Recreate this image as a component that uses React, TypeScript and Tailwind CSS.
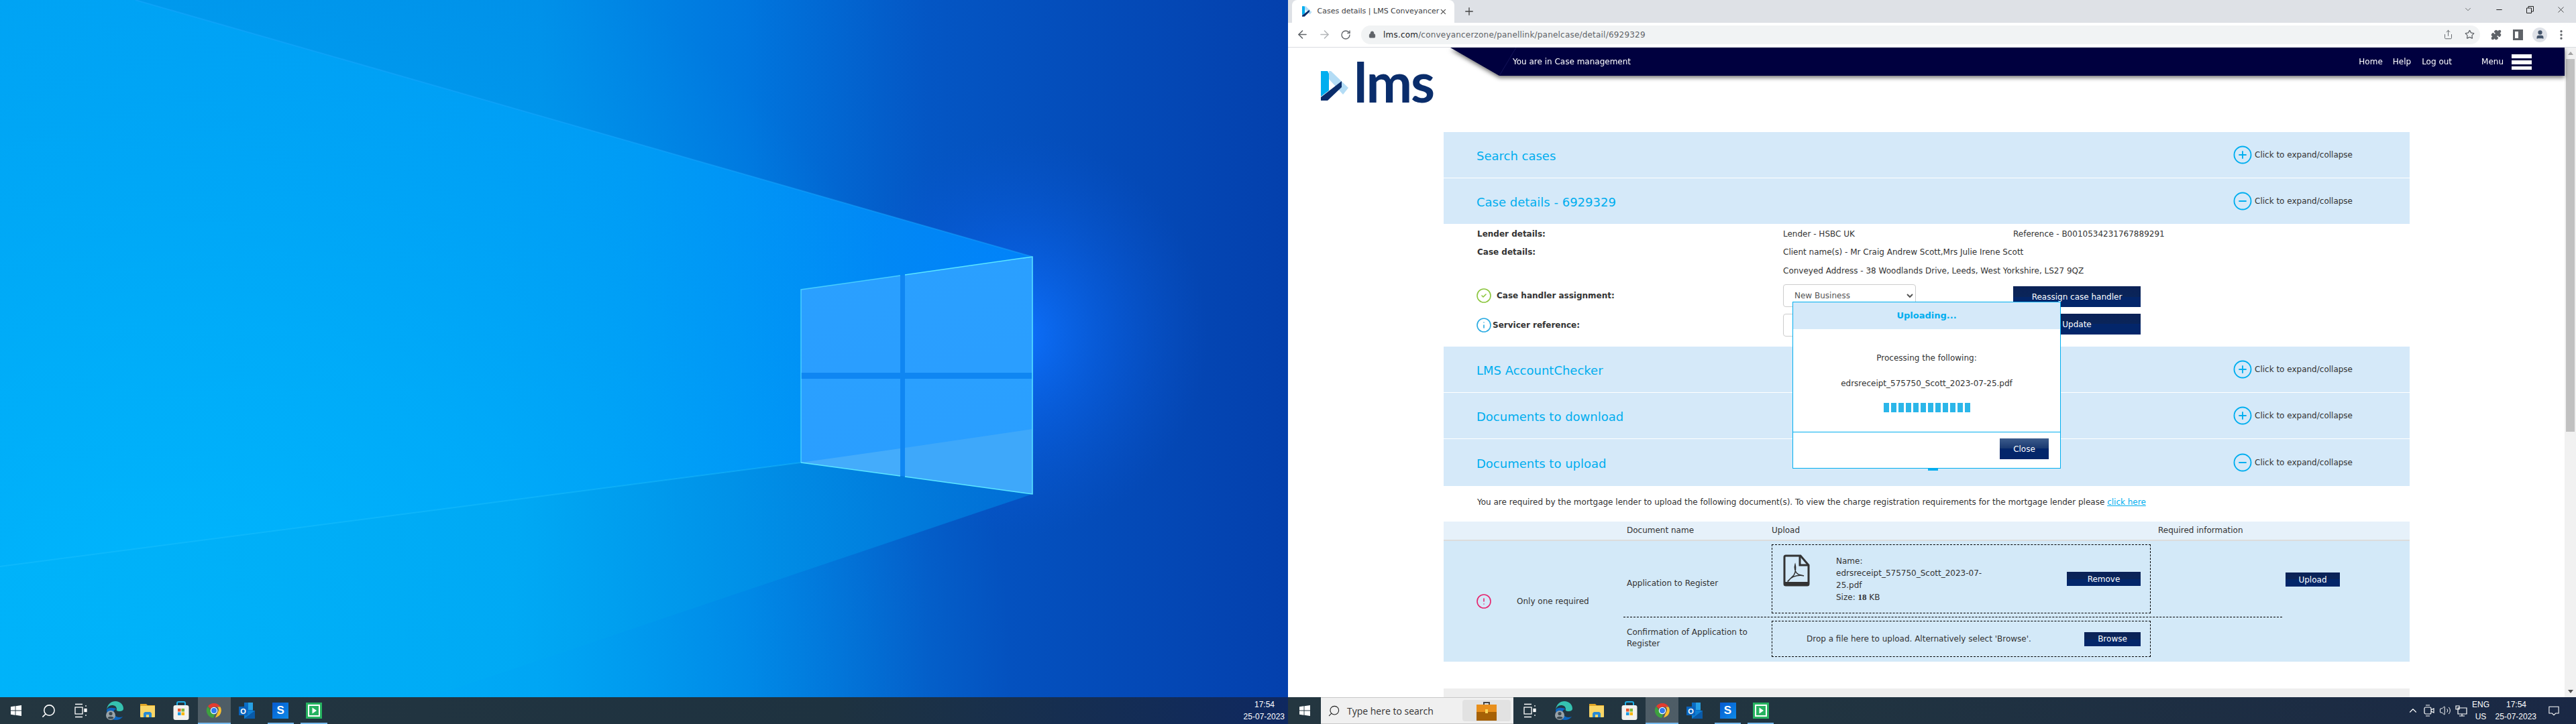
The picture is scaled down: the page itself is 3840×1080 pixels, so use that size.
import {
  ArrowLeft,
  ArrowRight,
  ChevronDown,
  ChevronUp,
  CircleAlert,
  CircleCheck,
  CircleMinus,
  CirclePlus,
  Info,
  Lock,
  Minus,
  MoreVertical,
  Plus,
  Puzzle,
  RotateCw,
  Search,
  Share,
  Star,
  User,
  Volume2,
  X,
} from 'lucide-react'
import type { ReactNode } from 'react'

const ui = { fontFamily: '"DejaVu Sans", sans-serif' }

function Wallpaper() {
  return (
    <svg viewBox="0 0 1920 1040" preserveAspectRatio="none" className="absolute inset-0 h-full w-full">
      <defs>
        <linearGradient id="base" x1="0" x2="1" y1="0" y2="0">
          <stop offset="0" stopColor="#0097ec" />
          <stop offset="0.42" stopColor="#008fe8" />
          <stop offset="0.58" stopColor="#0076de" />
          <stop offset="0.72" stopColor="#0456c4" />
          <stop offset="1" stopColor="#0440ad" />
        </linearGradient>
        <linearGradient id="beam" gradientUnits="userSpaceOnUse" x1="0" y1="400" x2="1539" y2="560">
          <stop offset="0" stopColor="#00a4f5" />
          <stop offset="0.6" stopColor="#009cf8" />
          <stop offset="1" stopColor="#0088ff" />
        </linearGradient>
        <radialGradient id="bottomGlow" gradientUnits="userSpaceOnUse" cx="260" cy="1040" r="1250">
          <stop offset="0" stopColor="#00bcff" stopOpacity="0.9" />
          <stop offset="0.45" stopColor="#00b4fb" stopOpacity="0.6" />
          <stop offset="1" stopColor="#00a8f4" stopOpacity="0" />
        </radialGradient>
        <linearGradient id="floor" gradientUnits="userSpaceOnUse" x1="0" y1="900" x2="1539" y2="900">
          <stop offset="0" stopColor="#00b4fa" />
          <stop offset="0.5" stopColor="#00aaf4" />
          <stop offset="0.75" stopColor="#0090e6" />
          <stop offset="1" stopColor="#0078dc" />
        </linearGradient>
        <radialGradient id="glow" cx="0.5" cy="0.5" r="0.5">
          <stop offset="0" stopColor="#0d72ff" stopOpacity="0.95" />
          <stop offset="0.5" stopColor="#0a62e8" stopOpacity="0.5" />
          <stop offset="1" stopColor="#0a55d0" stopOpacity="0" />
        </radialGradient>
        <linearGradient id="pane" x1="0" x2="0.3" y1="0" y2="1">
          <stop offset="0" stopColor="#2aa0ff" />
          <stop offset="1" stopColor="#2a9eff" />
        </linearGradient>
      </defs>
      <rect width="1920" height="1040" fill="url(#base)" />
      <rect x="1240" y="200" width="560" height="600" fill="url(#glow)" />
      <polygon points="202,0 1539,383 1194,560 1194,690 0,845 0,0" fill="url(#beam)" opacity="0.85" />
      <rect width="1920" height="1040" fill="url(#bottomGlow)" />
      <polygon points="0,845 1194,690 1539,737 640,1040 0,1040" fill="url(#floor)" opacity="0.75" />
      <line x1="202" y1="0" x2="1539" y2="383" stroke="#1aa8ff" strokeOpacity="0.45" strokeWidth="2" />
      <line x1="0" y1="845" x2="1194" y2="690" stroke="#20c4ff" strokeOpacity="0.4" strokeWidth="2" />
      <polygon points="1194,432 1539,383 1539,737 1194,690" fill="#0f86f2" />
      <polygon points="1194,432 1342,411 1342,556 1194,556" fill="url(#pane)" />
      <polygon points="1349,410 1539,383 1539,556 1349,556" fill="url(#pane)" />
      <polygon points="1194,565 1342,565 1342,710 1194,690" fill="url(#pane)" />
      <polygon points="1349,565 1539,565 1539,737 1349,711" fill="url(#pane)" />
      <polygon points="1194,690 1342,669 1342,710" fill="#57b5f8" opacity="0.6" />
      <polygon points="1349,668 1539,640 1539,737 1349,711" fill="#4aaef8" opacity="0.65" />
      <g fill="none" stroke="#5be6ff" strokeWidth="1.5">
        <polyline points="1194,690 1194,432 1342,411" strokeOpacity="0.7" />
        <polyline points="1349,410 1539,383 1539,737 1349,711" />
        <line x1="1194" y1="690" x2="1342" y2="710" />
      </g>
    </svg>
  )
}

function WinLogo({ size = 18 }: { size?: number }) {
  return (
    <svg width={size} height={size} viewBox="0 0 18 18" fill="#fff">
      <path d="M0 2.600 7.400 1.500v7H0zM8.400 1.400 18 0v8.500H8.400zM0 9.500h7.400v7L0 15.400zM8.400 9.500H18V18l-9.600-1.400z" />
    </svg>
  )
}

function TaskView() {
  return (
    <svg width="20" height="22" viewBox="0 0 20 22" fill="none" stroke="#fff" strokeWidth="1.3">
      <path d="M2 1.500h11M2 20.500h11" />
      <rect x="2" y="6" width="11" height="10" />
      <path d="M18 3v2M18 17v2" />
      <rect x="16" y="8.500" width="3" height="4" fill="#fff" />
    </svg>
  )
}

function EdgeIcon() {
  return (
    <svg width="26" height="30" viewBox="0 0 26 30">
      <path d="M1 14C2 5 8 1 14 1c7 0 12 5 12 11 0 3-3 4-6 4-3 0-5-1-4-3 0-4-3-6-7-6-4 0-7 3-8 7z" fill="#35c1b0" />
      <path d="M1 14c0 8 6 15 14 15 4 0 8-2 10-5-5 2-11 1-13-4-1-3-1-7 4-7-4-3-13-3-15 1z" fill="#0c66c2" />
      <circle cx="7" cy="22" r="7" fill="#9aa3a8" />
      <circle cx="7" cy="19.500" r="2.600" fill="#3c4a52" />
      <path d="M2.500 26c1-3 8-3 9 0-2 2-7 2-9 0z" fill="#3c4a52" />
    </svg>
  )
}

function FolderIcon() {
  return (
    <svg width="24" height="22" viewBox="0 0 24 22">
      <path d="M1 1h9l2 2h11v3H1z" fill="#e0a526" />
      <rect x="1" y="4" width="22" height="17" rx="1" fill="#fad667" />
      <path d="M6 21v-6l2-2h8l2 2v6h-4v-4h-4v4z" fill="#2a8ad4" />
    </svg>
  )
}

function StoreIcon() {
  return (
    <svg width="24" height="29" viewBox="0 0 24 29">
      <path d="M6 8V3c0-1 1-2 2-2h8c1 0 2 1 2 2v5" fill="none" stroke="#1fb0e8" strokeWidth="2" />
      <rect x="0.500" y="6" width="23" height="22" rx="3" fill="#f4f2ef" />
      <rect x="7" y="11" width="4.500" height="4.500" fill="#e8552d" />
      <rect x="12.500" y="11" width="4.500" height="4.500" fill="#7eb73a" />
      <rect x="7" y="16.500" width="4.500" height="4.500" fill="#1c9ce6" />
      <rect x="12.500" y="16.500" width="4.500" height="4.500" fill="#fbb810" />
    </svg>
  )
}

function ChromeIcon() {
  return (
    <svg width="24" height="24" viewBox="0 0 48 48">
      <path d="M24 2a22 22 0 0 1 19 11H24a11 11 0 0 0-10 6L6 11A22 22 0 0 1 24 2z" fill="#e33b2e" />
      <path d="M43 13a22 22 0 0 1-15 32l9-20a11 11 0 0 0-3-12z" fill="#fbc02d" />
      <path d="M6 11l9 15a11 11 0 0 0 12 8l-5 12A22 22 0 0 1 6 11z" fill="#3da13f" />
      <circle cx="24" cy="24" r="10.500" fill="#fff" />
      <circle cx="24" cy="24" r="8" fill="#2f7bf0" />
    </svg>
  )
}

function OutlookIcon() {
  return (
    <svg width="25" height="26" viewBox="0 0 25 26">
      <rect x="8" y="1" width="13" height="23" fill="#0a6cc4" />
      <rect x="14" y="1" width="7" height="11" fill="#27a0e4" />
      <path d="M8 13l16 0v12H8z" fill="#0e7fd4" />
      <path d="M8 25l16-12v12z" fill="#0a5aa8" />
      <rect x="0" y="7" width="13" height="13" fill="#0b64bd" />
      <text x="6.500" y="17.500" textAnchor="middle" fontSize="11" fontWeight="700" fill="#fff" fontFamily="Liberation Sans, sans-serif">O</text>
    </svg>
  )
}

function SIcon() {
  return (
    <div className="flex h-[24px] w-[24px] items-center justify-center bg-gradient-to-br from-[#0a5ad0] to-[#108ae8] text-[17px] font-bold text-white [font-family:'Liberation_Sans',sans-serif]">
      S
    </div>
  )
}

function GreenIcon() {
  return (
    <svg width="24" height="24" viewBox="0 0 24 24">
      <rect width="24" height="24" fill="#26b260" />
      <rect x="3" y="3" width="18" height="18" fill="#fff" />
      <rect x="5" y="5" width="14" height="14" fill="#26b260" />
      <path d="M9.500 7.500 16 12l-6.500 4.500z" fill="#fff" />
    </svg>
  )
}

function Pin({ children, active, open }: { children: ReactNode; active?: boolean; open?: boolean }) {
  return (
    <div className={`relative flex h-full w-[49.5px] items-center justify-center ${active ? 'bg-white/20' : ''}`}>
      {children}
      {(open || active) && (
        <div className={`absolute bottom-0 h-[2px] bg-[#76b9ed] ${active ? 'left-0 right-0' : 'left-[5px] right-[5px]'}`} />
      )}
    </div>
  )
}

function Pins() {
  return (
    <>
      <Pin><EdgeIcon /></Pin>
      <Pin><FolderIcon /></Pin>
      <Pin><StoreIcon /></Pin>
      <Pin active><ChromeIcon /></Pin>
      <Pin><OutlookIcon /></Pin>
      <Pin open><SIcon /></Pin>
      <Pin open><GreenIcon /></Pin>
    </>
  )
}

function Clock() {
  return (
    <div className="flex w-[60px] flex-col items-end whitespace-nowrap text-[12px] leading-[18px] text-white [font-family:'Liberation_Sans',sans-serif]">
      <span className="w-full text-center">17:54</span>
      <span>25-07-2023</span>
    </div>
  )
}

function LeftTaskbar() {
  return (
    <div className="flex h-[40px] items-center bg-gradient-to-r from-[#243640] via-[#1e3240] via-65% to-[#0f2860]" style={ui}>
      <div className="flex h-full w-12 items-center justify-center"><WinLogo size={16} /></div>
      <div className="flex h-full w-12 items-center justify-center">
        <Search size={23} color="#fff" strokeWidth={1.6} className="-scale-x-100" />
      </div>
      <div className="mr-[2px] flex h-full w-12 items-center justify-center"><TaskView /></div>
      <Pins />
      <div className="flex-1" />
      <div className="pr-[5px]"><Clock /></div>
    </div>
  )
}

function RightTaskbar() {
  return (
    <div className="flex h-[40px] items-center bg-gradient-to-r from-[#243640] via-[#213440] via-40% to-[#1a2845]" style={ui}>
      <div className="flex h-full w-[49px] items-center justify-center"><WinLogo size={16} /></div>
      <div className="flex h-full w-[287px] items-center border-y border-[#c8c8c8] bg-[#f0f0f0] pr-[4px]">
        <Search size={19} color="#222" strokeWidth={1.4} className="ml-[10px] -scale-x-100" />
        <span className="ml-[10px] flex-1 text-[14px] text-[#333] [font-family:'Open_Sans',sans-serif]">Type here to search</span>
        <div className="flex h-[32px] w-[72px] items-center justify-center rounded-[4px] bg-[#e2e2e2]">
          <svg width="30" height="30" viewBox="0 0 30 30">
            <path d="M11 6V3h8v3" fill="none" stroke="#444" strokeWidth="2" />
            <rect x="0" y="6" width="30" height="11" fill="#e88f1c" />
            <rect x="0" y="17" width="30" height="13" fill="#a66106" />
            <rect x="13" y="13" width="4" height="6" fill="#f6d456" />
          </svg>
        </div>
      </div>
      <div className="mr-[2px] flex h-full w-12 items-center justify-center"><TaskView /></div>
      <div className="flex h-full items-center [&>div]:w-[49px]"><Pins /></div>
      <div className="flex-1" />
      <div className="flex items-center gap-[6px] text-white">
        <ChevronUp size={18} strokeWidth={1.5} />
        <svg width="18" height="20" viewBox="0 0 18 20" fill="none" stroke="#fff" strokeWidth="1.2">
          <rect x="2" y="5" width="10" height="10" rx="2" />
          <path d="M12 9l4-2v6l-4-2M4 2h6M4 18h6" />
        </svg>
        <Volume2 size={18} strokeWidth={1.3} />
        <svg width="18" height="18" viewBox="0 0 18 18" fill="none" stroke="#fff" strokeWidth="1.2">
          <path d="M4 5h13v9H4zM1 2h5v5H1zM10 14v3M6 17h8" />
        </svg>
      </div>
      <div className="flex w-[40px] flex-col items-center text-[12px] leading-[18px] text-white [font-family:'Liberation_Sans',sans-serif]">
        <span>ENG</span>
        <span>US</span>
      </div>
      <div className="ml-[3px]"><Clock /></div>
      <div className="ml-[18px] mr-[25px] w-[16px]">
        <svg width="16" height="15" viewBox="0 0 18 16" fill="none" stroke="#fff" strokeWidth="1.2">
          <path d="M1 1h16v11h-5l-3 3-3-3H1z" />
        </svg>
      </div>
    </div>
  )
}

function Favicon({ size = 14 }: { size?: number }) {
  return (
    <svg width={size * 0.93} height={size} viewBox="0 0 41 44">
      <path d="M0 0h10l2 4v25l-12 9z" fill="#00aeef" />
      <path d="M12 0h3l26 25-8 10L12 12z" fill="#b3dcf5" />
      <path d="M0 44v-5l31-24v9L10 44z" fill="#0a2d6b" />
    </svg>
  )
}

function ChromeBar() {
  return (
    <>
      <div className="flex h-[34px] bg-[#dee1e6] pl-[6px]">
        <div className="flex h-full w-[242px] items-center rounded-t-[8px] bg-white pl-[15px] pr-[10px]">
          <Favicon size={16} />
          <span className="ml-[8px] flex-1 whitespace-nowrap text-[11px] text-[#3c4043]">Cases details | LMS Conveyancer</span>
          <X size={13} color="#444" />
        </div>
        <div className="ml-[13px] flex h-full items-center">
          <Plus size={18} color="#444" strokeWidth={1.8} />
        </div>
        <div className="flex-1" />
        <div className="flex h-[28px] items-center">
          <div className="flex w-[46px] justify-center"><ChevronDown size={14} color="#444" strokeWidth={1.2} /></div>
          <div className="flex w-[46px] justify-center"><Minus size={13} color="#222" /></div>
          <div className="flex w-[46px] justify-center">
            <svg width="11" height="11" viewBox="0 0 11 11" fill="none" stroke="#222">
              <path d="M.5 3h7v7.500h-7zM3 3V.5h7.500V8H8" />
            </svg>
          </div>
          <div className="flex w-[46px] justify-center"><X size={15} color="#222" strokeWidth={1.2} /></div>
        </div>
      </div>
      <div className="flex h-[37px] items-center border-b border-[#dadce0] bg-white pb-[1px]">
        <div className="flex w-[109px] items-center pl-[12px]">
          <ArrowLeft size={19} color="#5f6368" strokeWidth={2} />
          <ArrowRight size={19} color="#b4b6b9" strokeWidth={2} className="ml-[14px]" />
          <RotateCw size={16} color="#5f6368" strokeWidth={2} className="ml-[14px]" />
        </div>
        <div className="flex h-[28px] w-[1668px] items-center rounded-full bg-[#f1f3f4] pl-[11px] pr-[8px]">
          <Lock size={11} color="#5f6368" fill="#5f6368" />
          <span className="ml-[11px] flex-1 text-[12px] tracking-[0.2px]">
            <span className="text-[#202124]">lms.com</span>
            <span className="text-[#5f6368]">/conveyancerzone/panellink/panelcase/detail/6929329</span>
          </span>
          <Share size={15} color="#5f6368" strokeWidth={1.5} />
          <Star size={15} color="#5f6368" strokeWidth={2} className="ml-[17px]" />
        </div>
        <div className="flex flex-1 items-center pl-[16px]">
          <Puzzle size={16} color="#5f6368" fill="#5f6368" />
          <div className="ml-[17px] h-[16px] w-[15px] border-[3px] border-r-[7px] border-[#5f6368]" />
          <div className="ml-[14px] flex h-[22px] w-[22px] items-center justify-center rounded-full bg-[#dfe2e8]">
            <User size={15} color="#44546a" fill="#44546a" />
          </div>
          <MoreVertical size={18} color="#5f6368" strokeWidth={2.4} className="ml-[12px]" />
        </div>
      </div>
    </>
  )
}

function Logo() {
  return (
    <div className="flex items-end">
      <svg width="41" height="44" viewBox="0 0 41 44" className="mb-[1px]">
        <path d="M0 0h10l2 4v25l-12 9z" fill="#00aeef" />
        <path d="M12 0h3l26 25-8 10L12 12z" fill="#b3dcf5" />
        <path d="M0 44v-5l31-24v9L10 44z" fill="#0a2d6b" />
      </svg>
      <span className="ml-[8px] text-[82px] font-bold leading-[60px] tracking-[-2px] text-[#0a2d6b] [font-family:Lato,sans-serif]">lms</span>
    </div>
  )
}

function PageHeader() {
  return (
    <div className="flex h-[126px]">
      <div className="w-[242px] pl-[49px] pt-[20px]"><Logo /></div>
      <div className="flex-1 drop-shadow-[0_3px_3px_rgba(0,0,0,0.55)]">
        <div className="relative flex h-[42px] items-center bg-[#00003f] pl-[93px] pr-[49px] text-[12px] text-white [clip-path:polygon(0_0,100%_0,100%_100%,73px_100%)]">
          <svg width="30" height="42" viewBox="0 0 30 42" className="absolute left-[72px] top-0">
            <line x1="1" y1="42" x2="26" y2="0" stroke="#14145a" />
          </svg>
          <span className="flex-1">You are in Case management</span>
          <span>Home</span>
          <span className="ml-[15px]">Help</span>
          <span className="ml-[16px]">Log out</span>
          <span className="ml-[44px]">Menu</span>
          <div className="ml-[12px] flex w-[30px] flex-col gap-[3px]">
            <div className="h-[6px] bg-white" />
            <div className="h-[6px] bg-white" />
            <div className="h-[5px] bg-white" />
          </div>
        </div>
      </div>
    </div>
  )
}

function AccordionHead({ title, open, h = 68, mb = true }: { title: string; open?: boolean; h?: number; mb?: boolean }) {
  const Icon = open ? CircleMinus : CirclePlus
  return (
    <div
      className={`flex items-center bg-[#d5e9f9] pl-[49px] pr-[84px] ${mb ? 'mb-[1px]' : ''}`}
      style={{ height: h }}
    >
      <span className="flex-1 pt-[3px] text-[18px] text-[#00aeef]">{title}</span>
      <Icon size={30} color="#00aeef" strokeWidth={1.5} />
      <span className="ml-[3px] w-[147px] text-[12px] text-[#333]">Click to expand/collapse</span>
    </div>
  )
}

function NavyButton({ children, className }: { children: ReactNode; className: string }) {
  return (
    <button className={`flex items-center justify-center bg-[linear-gradient(#0b2257_0%,#0a2559_50%,#03266a_50%,#03266a_100%)] text-[12px] text-white ${className}`}>
      {children}
    </button>
  )
}

function CaseDetails() {
  return (
    <div className="h-[182px] pl-[50px] text-[12px] text-[#333]">
      <div className="grid h-[27px] grid-cols-[456px_343px_1fr] items-center">
        <span className="font-bold">Lender details:</span>
        <span>Lender - HSBC UK</span>
        <span>Reference - B0010534231767889291</span>
      </div>
      <div className="grid h-[28px] grid-cols-[456px_1fr] items-center">
        <span className="font-bold">Case details:</span>
        <span>Client name(s) - Mr Craig Andrew Scott,Mrs Julie Irene Scott</span>
      </div>
      <div className="grid h-[28px] grid-cols-[456px_1fr] items-center">
        <span />
        <span>Conveyed Address - 38 Woodlands Drive, Leeds, West Yorkshire, LS27 9QZ</span>
      </div>
      <div className="mt-[6px] grid h-[34px] grid-cols-[456px_343px_1fr] items-center">
        <span className="-ml-[2px] flex items-center font-bold">
          <CircleCheck size={24} color="#8cc63f" strokeWidth={1.6} />
          <span className="ml-[7px]">Case handler assignment:</span>
        </span>
        <select
          defaultValue="New Business"
          className="h-[34px] w-[198px] rounded-[4px] border border-[#ccc] bg-white pl-[12px] text-[12px] text-[#555]"
          style={ui}
        >
          <option>New Business</option>
        </select>
        <NavyButton className="mt-[3px] h-[31px] w-[190px]">Reassign case handler</NavyButton>
      </div>
      <div className="mt-[10px] grid h-[34px] grid-cols-[456px_343px_1fr] items-center">
        <span className="-ml-[2px] flex items-center font-bold">
          <Info size={24} color="#29abe2" strokeWidth={1.6} />
          <span className="ml-[1px]">Servicer reference:</span>
        </span>
        <div className="h-[34px] w-[198px] rounded-[4px] border border-[#ccc] bg-white" />
        <NavyButton className="mb-[3px] h-[31px] w-[190px]">Update</NavyButton>
      </div>
    </div>
  )
}

function PdfIcon() {
  return (
    <svg width="40" height="48" viewBox="0 0 40 48" fill="none">
      <path d="M2 4a2 2 0 0 1 2-2h22l12 14v28a2 2 0 0 1-2 2H4a2 2 0 0 1-2-2z" fill="#d3e9f8" stroke="#333" strokeWidth="3" />
      <path d="M25 3v13h12" stroke="#333" strokeWidth="3" />
      <path d="M7 40l9-9c3-4 3-12 2-16-2 6 0 12 5 15l8 2c-6-2-15 0-20 4-2 2-4 5-4 4z" stroke="#333" strokeWidth="1.5" />
      <path d="M2 41h36v3a2 2 0 0 1-2 2H4a2 2 0 0 1-2-2z" fill="#333" />
    </svg>
  )
}

function UploadTable() {
  return (
    <div className="text-[12px] text-[#333]">
      <div className="flex h-[29px] items-center border-b-2 border-[#dcdcdc] bg-[#e6f1fa] pb-[2px]">
        <span className="ml-[273px] w-[216px]">Document name</span>
        <span className="w-[576px]">Upload</span>
        <span>Required information</span>
      </div>
      <div className="flex h-[180px] bg-[#d3e9f8]">
        <div className="flex w-[268px] items-center pl-[48px]">
          <CircleAlert size={24} color="#e6246e" strokeWidth={1.6} />
          <span className="ml-[37px]">Only one required</span>
        </div>
        <div className="w-[982px]">
          <div className="flex h-[114px] items-start border-b border-dashed border-black pt-[5px]">
            <span className="w-[221px] pl-[5px] pt-[49px]">Application to Register</span>
            <div className="flex h-[103px] w-[565px] items-center border border-dashed border-black pl-[16px] pr-[14px]">
              <div className="mt-[14px] self-start"><PdfIcon /></div>
              <div className="ml-[39px] flex-1 leading-[18px]">
                Name:
                <br />
                edrsreceipt_575750_Scott_2023-07-
                <br />
                25.pdf
                <br />
                Size: <b className="[font-family:'Liberation_Serif',serif] text-[13px]">18</b> KB
              </div>
              <NavyButton className="h-[21px] w-[110px]">Remove</NavyButton>
            </div>
          </div>
          <div className="flex pt-[5px]">
            <span className="w-[221px] pl-[5px] pt-[9px] leading-[17px]">
              Confirmation of Application to
              <br />
              Register
            </span>
            <div className="flex h-[54px] w-[565px] items-center border border-dashed border-black pl-[51px] pr-[14px]">
              <span className="flex-1">Drop a file here to upload. Alternatively select 'Browse'.</span>
              <NavyButton className="h-[21px] w-[84px]">Browse</NavyButton>
            </div>
          </div>
        </div>
        <div className="pl-[5px] pt-[47px]">
          <NavyButton className="h-[21px] w-[81px]">Upload</NavyButton>
        </div>
      </div>
    </div>
  )
}

function UploadModal() {
  return (
    <div className="absolute left-[752px] top-[379px] flex h-[249px] w-[400px] flex-col border border-[#00aeef] bg-white text-[12px] text-[#333]">
      <div className="flex h-[40px] items-center justify-center bg-[#d5e9f9] text-[13px] font-bold text-[#00aeef]">Uploading...</div>
      <div className="flex-1 text-center">
        <p className="mt-[34px] leading-[18px]">Processing the following:</p>
        <p className="mt-[20px] leading-[18px]">edrsreceipt_575750_Scott_2023-07-25.pdf</p>
        <div className="mt-[20px] flex justify-center gap-[3px]">
          {Array.from({ length: 12 }, (_, i) => (
            <div key={i} className="h-[14px] w-[8px] bg-[#2bb6e9]" />
          ))}
        </div>
      </div>
      <div className="flex h-[54px] items-start justify-end border-t border-[#00aeef] pr-[17px] pt-[9px]">
        <button className="flex h-[31px] w-[73px] items-center justify-center bg-[linear-gradient(#3d5c8c,#17376f_50%,#03266a_50%)] text-[12px] text-white">Close</button>
      </div>
      <div className="absolute -bottom-[4px] left-[201px] h-[3px] w-[15px] bg-[#00aeef]" />
    </div>
  )
}

function Scrollbar() {
  return (
    <div className="flex w-[17px] flex-col items-center bg-[#f1f1f1]">
      <div className="flex h-[17px] items-center">
        <div className="h-0 w-0 border-x-[4px] border-b-[5px] border-x-transparent border-b-[#a3a3a3]" />
      </div>
      <div className="h-[556px] w-[13px] bg-[#c1c1c1]" />
      <div className="flex-1" />
      <div className="flex h-[17px] items-center">
        <div className="h-0 w-0 border-x-[4px] border-t-[5px] border-x-transparent border-t-[#505050]" />
      </div>
    </div>
  )
}

function Page() {
  return (
    <div className="relative flex min-h-0 flex-1 overflow-hidden bg-white">
      <div className="flex-1">
        <PageHeader />
        <div className="ml-[232px] w-[1440px]">
          <AccordionHead title="Search cases" />
          <AccordionHead title="Case details - 6929329" open />
          <CaseDetails />
          <AccordionHead title="LMS AccountChecker" />
          <AccordionHead title="Documents to download" />
          <AccordionHead title="Documents to upload" open h={70} mb={false} />
          <p className="flex h-[53px] items-center pb-[6px] pl-[50px] text-[12px] text-[#333]">
            <span>
              You are required by the mortgage lender to upload the following document(s). To view the charge registration requirements for the mortgage lender please{' '}
              <span className="text-[#00aeef] underline">click here</span>
            </span>
          </p>
          <UploadTable />
          <div className="mt-[40px] h-[40px] bg-[#eeeeee]" />
        </div>
      </div>
      <Scrollbar />
      <UploadModal />
    </div>
  )
}

export default function App() {
  return (
    <div className="flex h-[1080px] w-[3840px] overflow-hidden" style={ui}>
      <div className="flex w-[1920px] flex-col">
        <div className="relative flex-1"><Wallpaper /></div>
        <LeftTaskbar />
      </div>
      <div className="flex w-[1920px] flex-col">
        <ChromeBar />
        <Page />
        <RightTaskbar />
      </div>
    </div>
  )
}
